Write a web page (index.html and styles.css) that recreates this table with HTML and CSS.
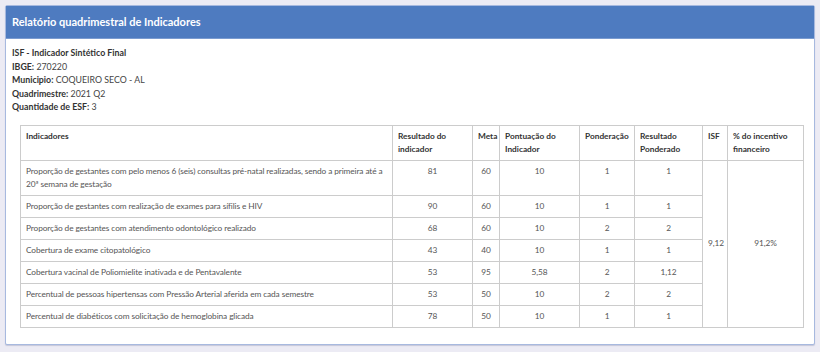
FILE: index.html
```html
<!DOCTYPE html>
<html lang="pt-BR">
<head>
<meta charset="utf-8">
<title>Relatório quadrimestral de Indicadores</title>
<link rel="stylesheet" href="styles.css">
</head>
<body>
<div class="card">
  <div class="card-header">Relatório quadrimestral de Indicadores</div>
  <div class="card-body">
    <div class="info">
      <div class="title-line"><b>ISF - Indicador Sintético Final</b></div>
      <div><b>IBGE:</b> 270220</div>
      <div><b>Municipio:</b> COQUEIRO SECO - AL</div>
      <div><b>Quadrimestre:</b> 2021 Q2</div>
      <div><b>Quantidade de ESF:</b> 3</div>
    </div>
    <table class="report">
      <colgroup>
        <col class="c-ind"><col class="c-res"><col class="c-meta"><col class="c-pont"><col class="c-pond"><col class="c-rp"><col class="c-isf"><col class="c-pct">
      </colgroup>
      <thead>
        <tr>
          <th>Indicadores</th>
          <th>Resultado do indicador</th>
          <th>Meta</th>
          <th>Pontuação do Indicador</th>
          <th>Ponderação</th>
          <th>Resultado Ponderado</th>
          <th>ISF</th>
          <th>% do incentivo financeiro</th>
        </tr>
      </thead>
      <tbody>
        <tr>
          <td>Proporção de gestantes com pelo menos 6 (seis) consultas pré-natal realizadas, sendo a primeira até a 20ª semana de gestação</td>
          <td class="num">81</td><td class="num">60</td><td class="num">10</td><td class="num">1</td><td class="num">1</td>
          <td class="num mid" rowspan="7">9,12</td>
          <td class="num mid" rowspan="7">91,2%</td>
        </tr>
        <tr>
          <td>Proporção de gestantes com realização de exames para sífilis e HIV</td>
          <td class="num">90</td><td class="num">60</td><td class="num">10</td><td class="num">1</td><td class="num">1</td>
        </tr>
        <tr>
          <td>Proporção de gestantes com atendimento odontológico realizado</td>
          <td class="num">68</td><td class="num">60</td><td class="num">10</td><td class="num">2</td><td class="num">2</td>
        </tr>
        <tr>
          <td>Cobertura de exame citopatológico</td>
          <td class="num">43</td><td class="num">40</td><td class="num">10</td><td class="num">1</td><td class="num">1</td>
        </tr>
        <tr>
          <td>Cobertura vacinal de Poliomielite inativada e de Pentavalente</td>
          <td class="num">53</td><td class="num">95</td><td class="num">5,58</td><td class="num">2</td><td class="num">1,12</td>
        </tr>
        <tr>
          <td>Percentual de pessoas hipertensas com Pressão Arterial aferida em cada semestre</td>
          <td class="num">53</td><td class="num">50</td><td class="num">10</td><td class="num">2</td><td class="num">2</td>
        </tr>
        <tr>
          <td>Percentual de diabéticos com solicitação de hemoglobina glicada</td>
          <td class="num">78</td><td class="num">50</td><td class="num">10</td><td class="num">1</td><td class="num">1</td>
        </tr>
      </tbody>
    </table>
  </div>
</div>
</body>
</html>
```

FILE: styles.css
```css
html, body {
  margin: 0;
  padding: 0;
}
body {
  background: #ecebf4;
  font-family: Lato, "Open Sans", sans-serif;
  color: #444;
  font-size: 8.6px;
  padding: 5px;
  height: 352px;
  box-sizing: border-box;
}
.card {
  background: #fff;
  border: 1px solid #a7b9df;
  border-radius: 2px;
  box-shadow: 0 1px 1px rgba(80, 90, 140, 0.25);
}
.card-header {
  background: #4e7bc0;
  color: #fff;
  font-weight: 700;
  font-size: 11px;
  display: flex;
  align-items: center;
  padding: 0 6px 1px 6px;
  box-sizing: border-box;
  height: 33px;
  border-bottom: 1px solid #7a9bd0;
}
.card-body {
  padding: 7px 6px 16px 6px;
}
.info {
  line-height: 13.6px;
  color: #444;
  font-size: 8.8px;
}
.info b {
  color: #333;
}
.report {
  margin: 11px 0 0 8px;
  border-collapse: collapse;
  width: 783px;
  table-layout: fixed;
  color: #555;
  font-size: 8.3px;
}
.report td {
  letter-spacing: -0.1px;
}
.report th, .report td {
  border: 1px solid #cccccc;
  padding: 4px 5px;
  line-height: 13px;
  vertical-align: top;
  text-align: left;
}
.report th {
  color: #333;
  font-weight: 700;
}
.report td.num {
  text-align: center;
}
.report td.mid {
  vertical-align: middle;
}
.c-ind { width: 372px; }
.c-res { width: 80px; }
.c-meta { width: 27px; }
.c-pont { width: 80px; }
.c-pond { width: 55px; }
.c-rp { width: 68px; }
.c-isf { width: 25px; }
.c-pct { width: 76px; }
```
